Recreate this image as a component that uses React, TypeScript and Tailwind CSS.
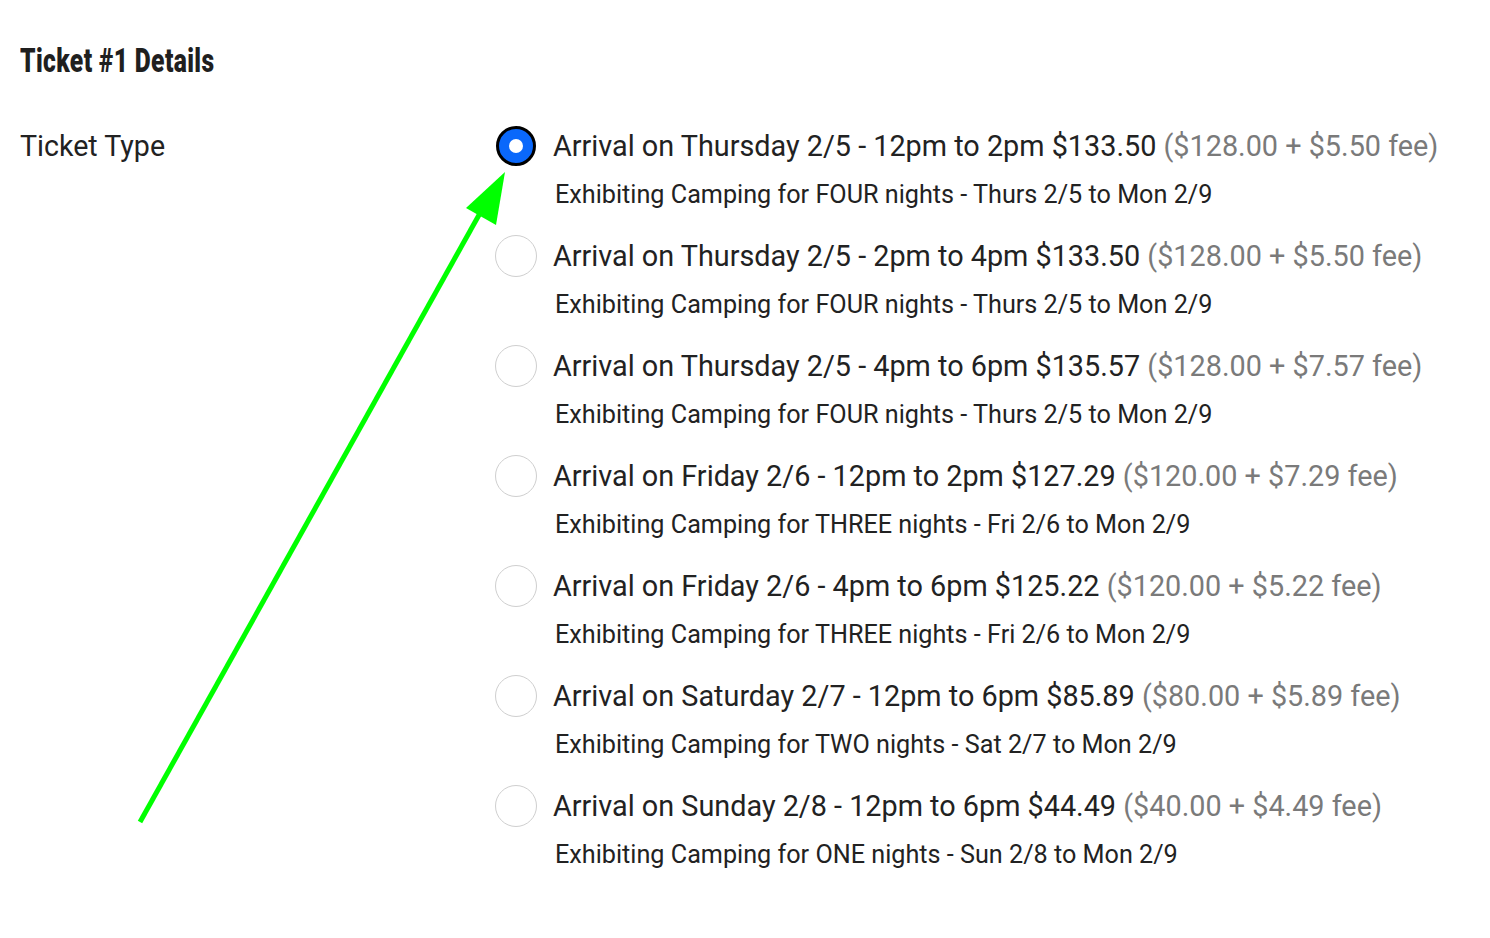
import React from "react";

const options = [
  { main: "Arrival on Thursday 2/5 - 12pm to 2pm $133.50", fee: "($128.00 + $5.50 fee)", sub: "Exhibiting Camping for FOUR nights - Thurs 2/5 to Mon 2/9" },
  { main: "Arrival on Thursday 2/5 - 2pm to 4pm $133.50", fee: "($128.00 + $5.50 fee)", sub: "Exhibiting Camping for FOUR nights - Thurs 2/5 to Mon 2/9" },
  { main: "Arrival on Thursday 2/5 - 4pm to 6pm $135.57", fee: "($128.00 + $7.57 fee)", sub: "Exhibiting Camping for FOUR nights - Thurs 2/5 to Mon 2/9" },
  { main: "Arrival on Friday 2/6 - 12pm to 2pm $127.29", fee: "($120.00 + $7.29 fee)", sub: "Exhibiting Camping for THREE nights - Fri 2/6 to Mon 2/9" },
  { main: "Arrival on Friday 2/6 - 4pm to 6pm $125.22", fee: "($120.00 + $5.22 fee)", sub: "Exhibiting Camping for THREE nights - Fri 2/6 to Mon 2/9" },
  { main: "Arrival on Saturday 2/7 - 12pm to 6pm $85.89", fee: "($80.00 + $5.89 fee)", sub: "Exhibiting Camping for TWO nights - Sat 2/7 to Mon 2/9" },
  { main: "Arrival on Sunday 2/8 - 12pm to 6pm $44.49", fee: "($40.00 + $4.49 fee)", sub: "Exhibiting Camping for ONE nights - Sun 2/8 to Mon 2/9" },
];

export default function App() {
  return (
    <div className="relative w-[1490px] h-[938px] bg-white text-[#222] font-['Roboto',sans-serif]">
      <div className="pl-5 pt-[40px]">
        <h2 className="h-[40px] text-[34px] leading-[40px] font-black text-[#1f1f1f] font-['Roboto',sans-serif] whitespace-nowrap">
          <span className="inline-block origin-left scale-x-[0.725] tracking-[0.5px]">Ticket #1 Details</span>
        </h2>
        <div className="flex mt-[45px]">
          <div className="w-[475px] text-[28.6px] leading-[42px]">Ticket Type</div>
          <div className="flex flex-col gap-[23px]">
            {options.map((o, i) => (
              <label key={i} className="flex items-start gap-4">
                {i === 0 ? (
                  <span className="w-[40px] h-[40px] m-[1px] rounded-full border-[3px] border-black bg-[#0a68fb] flex items-center justify-center shrink-0">
                    <span className="w-[14px] h-[14px] rounded-full bg-white" />
                  </span>
                ) : (
                  <span className="w-[42px] h-[42px] rounded-full border border-[#cfcfcf] bg-white shrink-0" />
                )}
                <div className="flex flex-col">
                  <div className="text-[28.8px] leading-[42px] whitespace-nowrap">
                    {o.main} <span className="text-[#7a7a7a]">{o.fee}</span>
                  </div>
                  <div className="text-[25.2px] leading-[34px] mt-[11px] pl-[2px] whitespace-nowrap">{o.sub}</div>
                </div>
              </label>
            ))}
          </div>
        </div>
      </div>
      <svg className="absolute left-0 top-0 pointer-events-none" width="1490" height="938">
        <line x1="140" y1="822" x2="484" y2="206" stroke="#00ff00" strokeWidth="5" />
        <polygon points="505,172 496,225 466,208" fill="#00ff00" />
      </svg>
    </div>
  );
}
